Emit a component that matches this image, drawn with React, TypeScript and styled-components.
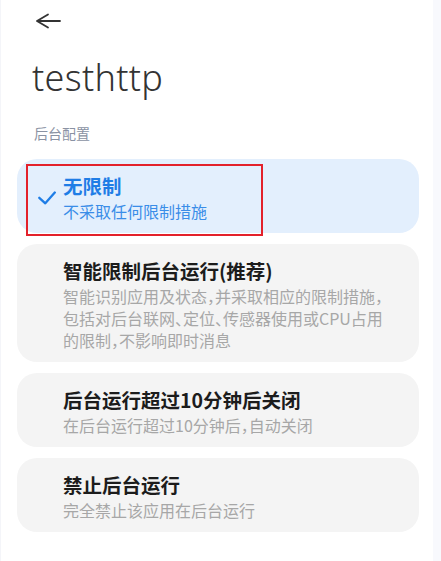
import React from "react";
import styled, { createGlobalStyle } from "styled-components";

const GlobalStyle = createGlobalStyle`
  html, body, #root { height: 100%; }
  body {
    margin: 0;
    background: #ffffff;
    font-family: "Noto Sans CJK SC", "Noto Sans", sans-serif;
    -webkit-font-smoothing: antialiased;
  }
`;

const Page = styled.div`
  display: flex;
  height: 100%;
  min-height: 561px;
`;

const Main = styled.main`
  width: 433px;
  flex: none;
  display: flex;
  flex-direction: column;
  border-left: 1px solid #f4f5f9;
  box-sizing: border-box;
  background: #ffffff;
`;

const SideStrip = styled.aside`
  flex: 1;
  background: #f8f9fd;
`;

const Header = styled.header`
  height: 41px;
  display: flex;
  align-items: center;
  padding-left: 34px;
`;

const BackButton = styled.button`
  border: 0;
  background: none;
  padding: 0;
  width: 26px;
  height: 16px;
  display: flex;
  align-items: center;
  cursor: pointer;
  color: #333333;
`;

const Title = styled.h1`
  margin: 13px 0 0 31px;
  font-family: "Noto Sans", "Open Sans", sans-serif;
  font-weight: 300;
  font-size: 36px;
  line-height: 48px;
  color: #333333;
  letter-spacing: 0.3px;
`;

const SectionLabel = styled.div`
  margin: 21px 0 0 33px;
  font-size: 14px;
  line-height: 20px;
  color: #8a92a3;
`;

const OptionList = styled.div`
  display: flex;
  flex-direction: column;
  gap: 11px;
  margin: 16px 14px 0 16px;
`;

const OptionCard = styled.div<{ $selected?: boolean }>`
  position: relative;
  display: grid;
  grid-template-columns: 46px 1fr;
  padding: 13px 17px 11px 0;
  border-radius: 20px;
  background: ${(p) => (p.$selected ? "#e3effd" : "#f4f4f4")};
  cursor: pointer;
`;

const CheckCell = styled.div`
  display: flex;
  align-items: center;
  justify-content: flex-end;
  padding-right: 7px;
  padding-top: 2px;
`;

const TextCell = styled.div`
  display: flex;
  flex-direction: column;
`;

const OptionTitle = styled.div<{ $selected?: boolean }>`
  font-size: 19.5px;
  line-height: 28px;
  font-weight: 700;
  color: ${(p) => (p.$selected ? "#1f7de6" : "#1c1c1c")};
`;

const OptionDesc = styled.div<{ $selected?: boolean }>`
  font-size: 16px;
  line-height: 22px;
  max-width: 328px;
  font-feature-settings: "halt";
  color: ${(p) => (p.$selected ? "#3a8de8" : "#a7a7a7")};
`;

const Highlight = styled.div`
  position: absolute;
  left: 9px;
  top: 5px;
  width: 237px;
  height: 72px;
  box-sizing: border-box;
  border: 2px solid #e3212b;
  pointer-events: none;
`;

const BackArrow = () => (
  <svg width="26" height="16" viewBox="0 0 26 16" fill="none">
    <path
      d="M13 1.5 L2 8 L13 14.5 M2 8 H25"
      stroke="currentColor"
      strokeWidth="1.8"
      strokeLinecap="round"
      strokeLinejoin="round"
    />
  </svg>
);

const CheckIcon = () => (
  <svg width="18" height="14" viewBox="0 0 18 14" fill="none">
    <path
      d="M1.3 6.8 L7.3 12.3 L16.8 1.5"
      stroke="#1e7de6"
      strokeWidth="2.3"
      strokeLinecap="round"
      strokeLinejoin="round"
    />
  </svg>
);

type Option = { title: string; desc: string; selected?: boolean };

const options: Option[] = [
  { title: "无限制", desc: "不采取任何限制措施", selected: true },
  {
    title: "智能限制后台运行(推荐)",
    desc: "智能识别应用及状态，并采取相应的限制措施，包括对后台联网、定位、传感器使用或CPU占用的限制，不影响即时消息",
  },
  { title: "后台运行超过10分钟后关闭", desc: "在后台运行超过10分钟后，自动关闭" },
  { title: "禁止后台运行", desc: "完全禁止该应用在后台运行" },
];

export default function App() {
  return (
    <>
      <GlobalStyle />
      <Page>
        <Main>
          <Header>
            <BackButton aria-label="返回">
              <BackArrow />
            </BackButton>
          </Header>
          <Title>testhttp</Title>
          <SectionLabel>后台配置</SectionLabel>
          <OptionList>
            {options.map((o) => (
              <OptionCard key={o.title} $selected={o.selected}>
                <CheckCell>{o.selected && <CheckIcon />}</CheckCell>
                <TextCell>
                  <OptionTitle $selected={o.selected}>{o.title}</OptionTitle>
                  <OptionDesc $selected={o.selected}>{o.desc}</OptionDesc>
                </TextCell>
                {o.selected && <Highlight />}
              </OptionCard>
            ))}
          </OptionList>
        </Main>
        <SideStrip />
      </Page>
    </>
  );
}
